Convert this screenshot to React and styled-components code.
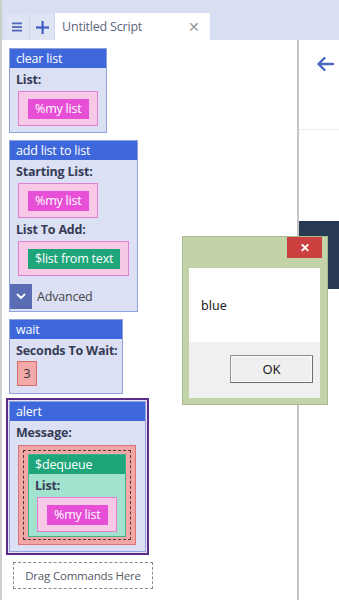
import React from "react";
import styled, { createGlobalStyle, css } from "styled-components";

const Global = createGlobalStyle`
  html, body { margin: 0; padding: 0; background: #fff; }
  body { font-family: "Open Sans", "Noto Sans", sans-serif; letter-spacing: -0.2px; }
  * { box-sizing: border-box; }
`;

const Page = styled.div`
  position: relative;
  width: 339px;
  height: 600px;
  overflow: hidden;
  display: flex;
  flex-direction: column;
  background: #fff;
`;

const TopBar = styled.div`
  height: 40px;
  flex: none;
  background: #d9dff2;
  display: flex;
  align-items: flex-end;
  padding-left: 3px;
  border-left: 2px solid #c8d2c0;
`;

const TabButton = styled.div`
  width: 25px;
  height: 26px;
  display: flex;
  align-items: center;
  justify-content: center;
  background: #dfe4f5;
  border-right: 1px solid #cfd5ea;
  color: #4160c4;
`;

const Tab = styled.div`
  width: 155px;
  height: 27px;
  background: #fff;
  display: flex;
  align-items: center;
  justify-content: space-between;
  padding: 0 10px 0 7px;
  font-size: 12.5px;
  color: #5b6580;
`;

const TabClose = styled.span`
  color: #999;
  font-size: 14px;
`;

const Main = styled.div`
  flex: 1;
  display: flex;
`;

const ScriptPane = styled.div`
  width: 299px;
  flex: none;
  border-left: 2px solid #cfcfcf;
  border-right: 2px solid #c6c6c6;
  padding: 8px 0 0 7px;
  display: flex;
  flex-direction: column;
  align-items: flex-start;
  gap: 7px;
`;

const SidePane = styled.div`
  flex: 1;
  display: flex;
  flex-direction: column;
`;

const SideHeader = styled.div`
  height: 90px;
  border-bottom: 1px solid #ececec;
  display: flex;
  justify-content: flex-end;
  padding: 16px 5px 0 0;
`;

const NavyBlock = styled.div`
  margin-top: 91px;
  height: 68px;
  background: #263a52;
`;

const Block = styled.div`
  background: #dbe0f5;
  border: 1px solid ${(p) => p.$border || "#90a2dc"};
  display: flex;
  flex-direction: column;
  align-items: flex-start;
  ${(p) =>
    p.$selected &&
    css`
      box-shadow: 0 0 0 1px #e6e2f2, 0 0 0 3px #5c2b88;
    `}
`;

const Header = styled.div`
  align-self: stretch;
  height: 19px;
  background: ${(p) => p.$bg || "#3e67db"};
  color: #fff;
  font-size: 12.5px;
  line-height: 19px;
  padding-left: 6px;
  white-space: nowrap;
`;

const Body = styled.div`
  padding: ${(p) => p.$pad || "3px 8px 6px 6px"};
  display: flex;
  flex-direction: column;
  align-items: flex-start;
  background: ${(p) => p.$bg || "transparent"};
`;

const Label = styled.div`
  font-size: 12.5px;
  font-weight: 700;
  color: #363c55;
  line-height: 18px;
  white-space: nowrap;
  margin-bottom: ${(p) => p.$mb || "2px"};
`;

const Slot = styled.div`
  margin-left: 2px;
  background: ${(p) => p.$bg || "#f7c9e6"};
  border: 1px solid ${(p) => p.$border || "#e27fd2"};
  padding: ${(p) => p.$pad || "7px 8px 6px 9px"};
  margin-bottom: ${(p) => p.$mb || "0"};
`;

const Chip = styled.div`
  height: 20px;
  padding: 0 7px;
  background: ${(p) => p.$bg};
  color: #fff;
  font-size: 12.5px;
  line-height: 20px;
  white-space: nowrap;
`;

const NumberBox = styled.div`
  width: 20px;
  height: 25px;
  margin-left: 1px;
  background: #f4a8a8;
  border: 1px solid #d46c6c;
  font-size: 12.5px;
  color: #333;
  display: flex;
  align-items: center;
  justify-content: center;
`;

const Dashed = styled.div`
  border: 1px dashed #4a3a3a;
  padding: 3px 4px 2px 4px;
`;

const AdvancedRow = styled.div`
  display: flex;
  align-items: center;
  gap: 5px;
  margin: 8px 0 0 -6px;
  font-size: 12.5px;
  color: #444;
`;

const AdvButton = styled.div`
  width: 22px;
  height: 25px;
  background: #5a6db4;
  display: flex;
  align-items: center;
  justify-content: center;
`;

const DropZone = styled.div`
  margin: 3px 0 0 4px;
  width: 140px;
  height: 27px;
  border: 1px dashed #8a8a8a;
  font-size: 11.5px;
  color: #555b66;
  display: flex;
  align-items: center;
  justify-content: center;
`;

const Dialog = styled.div`
  position: absolute;
  left: 182px;
  top: 236px;
  width: 146px;
  height: 169px;
  background: #c3d3a8;
  border: 1px solid #a8b890;
  display: flex;
  flex-direction: column;
  padding: 0 7px 6px 6px;
`;

const TitleBar = styled.div`
  height: 31px;
  flex: none;
  display: flex;
  justify-content: flex-end;
  margin-right: -2px;
`;

const CloseBtn = styled.div`
  width: 35px;
  height: 21px;
  background: #c9403f;
  color: #fff;
  font-size: 12px;
  font-weight: 700;
  display: flex;
  align-items: center;
  justify-content: center;
`;

const DialogBody = styled.div`
  flex: 1;
  display: flex;
  flex-direction: column;
`;

const Message = styled.div`
  height: 74px;
  background: #fff;
  font-size: 12.5px;
  color: #222;
  padding: 29px 0 0 12px;
  letter-spacing: 0;
  font-family: "Noto Sans", "Open Sans", sans-serif;
`;

const ButtonArea = styled.div`
  flex: 1;
  background: #f0f0f0;
  display: flex;
  justify-content: flex-end;
  align-items: flex-start;
  padding: 13px 7px 0 0;
`;

const OkButton = styled.div`
  width: 83px;
  height: 28px;
  background: #efefef;
  border: 1px solid #8f8f8f;
  border-right-color: #6f6f6f;
  border-bottom-color: #6f6f6f;
  box-shadow: inset 0 0 0 1px #fafafa;
  font-size: 13px;
  color: #222;
  letter-spacing: 0;
  display: flex;
  align-items: center;
  justify-content: center;
  font-family: "Noto Sans", "Open Sans", sans-serif;
`;

const Hamburger = () => (
  <svg width="10" height="10" viewBox="0 0 10 10">
    <rect x="0" y="0.5" width="10" height="1.8" fill="#4d66b8" />
    <rect x="0" y="4.1" width="10" height="1.8" fill="#4d66b8" />
    <rect x="0" y="7.7" width="10" height="1.8" fill="#4d66b8" />
  </svg>
);

const Plus = () => (
  <svg width="13" height="13" viewBox="0 0 13 13">
    <rect x="5.5" y="0" width="2.2" height="13" fill="#3e5ec6" />
    <rect x="0" y="5.4" width="13" height="2.2" fill="#3e5ec6" />
  </svg>
);

const ArrowLeft = () => (
  <svg width="18" height="16" viewBox="0 0 18 16">
    <path d="M17 8H2.5M8.5 2L2.5 8l6 6" stroke="#4a67c6" strokeWidth="2.4" fill="none" strokeLinecap="round" strokeLinejoin="round" />
  </svg>
);

const Chevron = () => (
  <svg width="10" height="7" viewBox="0 0 10 7">
    <path d="M1.5 1.5L5 5l3.5-3.5" stroke="#fff" strokeWidth="1.8" fill="none" strokeLinecap="round" strokeLinejoin="round" />
  </svg>
);

const MAGENTA = "#e64fd6";
const GREEN = "#1ea67a";

export default function App() {
  return (
    <Page>
      <Global />
      <TopBar>
        <TabButton>
          <Hamburger />
        </TabButton>
        <TabButton>
          <Plus />
        </TabButton>
        <Tab>
          <span>Untitled Script</span>
          <TabClose>✕</TabClose>
        </Tab>
      </TopBar>
      <Main>
        <ScriptPane>
          <Block>
            <Header>clear list</Header>
            <Body>
              <Label>List:</Label>
              <Slot>
                <Chip $bg={MAGENTA}>%my list</Chip>
              </Slot>
            </Body>
          </Block>

          <Block>
            <Header>add list to list</Header>
            <Body $pad="3px 8px 2px 6px">
              <Label>Starting List:</Label>
              <Slot $mb="3px">
                <Chip $bg={MAGENTA}>%my list</Chip>
              </Slot>
              <Label>List To Add:</Label>
              <Slot>
                <Chip $bg={GREEN}>$list from text</Chip>
              </Slot>
              <AdvancedRow>
                <AdvButton>
                  <Chevron />
                </AdvButton>
                Advanced
              </AdvancedRow>
            </Body>
          </Block>

          <Block>
            <Header>wait</Header>
            <Body $pad="3px 4px 7px 6px">
              <Label $mb="1px">Seconds To Wait:</Label>
              <NumberBox>3</NumberBox>
            </Body>
          </Block>

          <Block $selected>
            <Header>alert</Header>
            <Body $pad="3px 9px 6px 6px">
              <Label $mb="3px">Message:</Label>
              <Slot $bg="#f4a6a6" $border="#d87474" $pad="4px">
                <Dashed>
                  <Block $border="#3cb48e">
                    <Header $bg={GREEN}>$dequeue</Header>
                    <Body $bg="#a2e3cf" $pad="3px 8px 4px 6px">
                      <Label>List:</Label>
                      <Slot>
                        <Chip $bg={MAGENTA}>%my list</Chip>
                      </Slot>
                    </Body>
                  </Block>
                </Dashed>
              </Slot>
            </Body>
          </Block>

          <DropZone>Drag Commands Here</DropZone>
        </ScriptPane>
        <SidePane>
          <SideHeader>
            <ArrowLeft />
          </SideHeader>
          <NavyBlock />
        </SidePane>
      </Main>

      <Dialog>
        <TitleBar>
          <CloseBtn>✕</CloseBtn>
        </TitleBar>
        <DialogBody>
          <Message>blue</Message>
          <ButtonArea>
            <OkButton>OK</OkButton>
          </ButtonArea>
        </DialogBody>
      </Dialog>
    </Page>
  );
}
